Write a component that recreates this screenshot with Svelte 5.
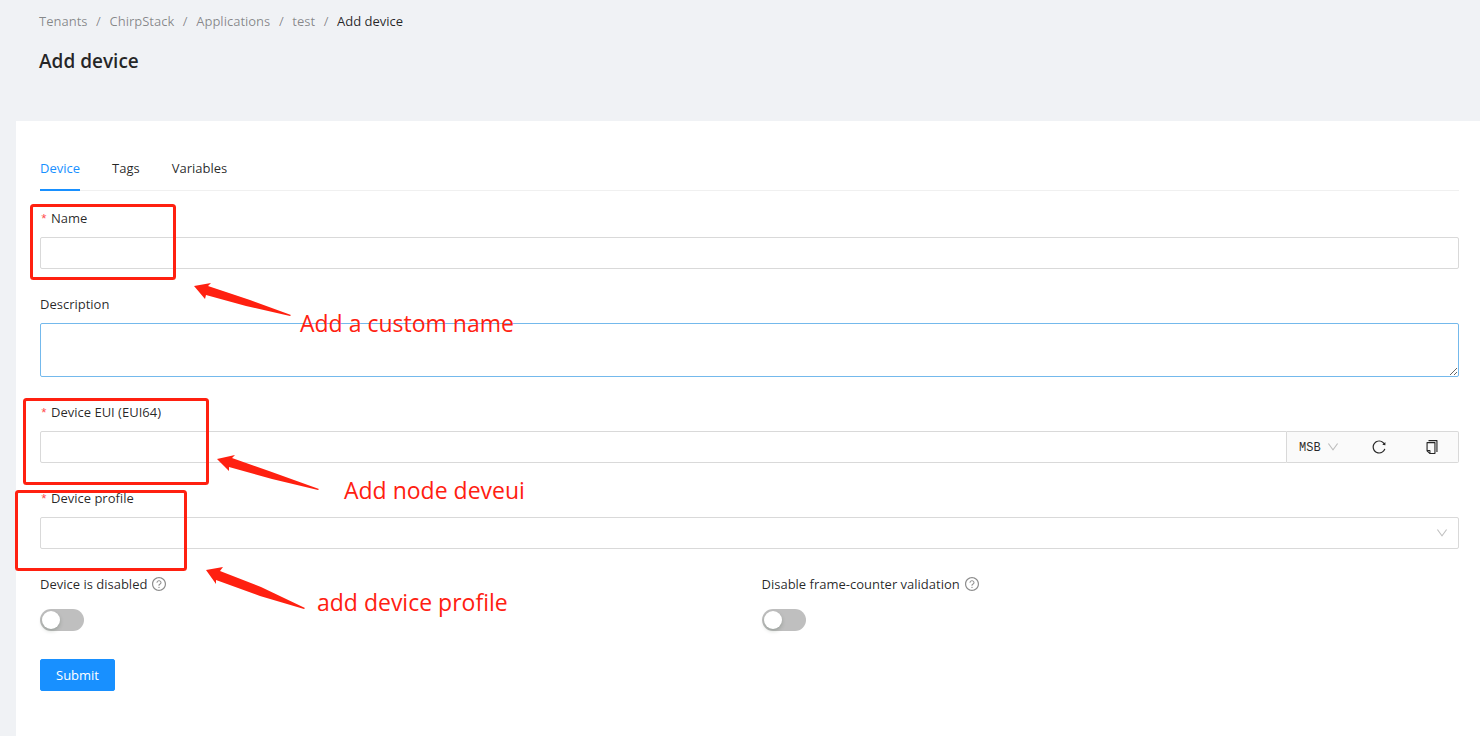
<!-- App.svelte - Add device form with setup hints -->
<script lang="ts">
  const crumbs = ['Tenants', 'ChirpStack', 'Applications', 'test'];
  const tabs = ['Device', 'Tags', 'Variables'];

  let activeTab = $state('Device');
  let name = $state('');
  let description = $state('');
  let devEui = $state('');
  let byteOrder = $state('MSB');
  let profile = $state('');

  const switches = $state([
    { id: 'is-disabled', label: 'Device is disabled', on: false },
    { id: 'skip-fcnt', label: 'Disable frame-counter validation', on: false },
  ]);

  const hints = [
    {
      text: 'Add a custom name',
      x: 300,
      y: 332,
      box: { x: 31.5, y: 205.5, w: 143, h: 73 },
      arrow: 'M194 286 L211 283 L208 286 L250 300 L291 315 L290 316 L246 306 L206 295 L205 299 Z',
    },
    {
      text: 'Add node deveui',
      x: 344,
      y: 499,
      box: { x: 24.5, y: 399.5, w: 183, h: 84 },
      arrow: 'M217 459 L235 455 L232 458 L269 471 L319 489 L318 490 L272 479 L229 467 L229 471 Z',
    },
    {
      text: 'add device profile',
      x: 317,
      y: 611,
      box: { x: 16.5, y: 491.5, w: 169, h: 78 },
      arrow: 'M206 570 L223 567 L220 571 L261 587 L305 608 L304 609 L260 596 L216 580 L216 584 Z',
    },
  ];

  function generateEui() {
    const bytes = crypto.getRandomValues(new Uint8Array(8));
    devEui = Array.from(bytes, (b) => b.toString(16).padStart(2, '0')).join('');
  }
</script>

{#snippet chevron()}
  <svg class="chevron" viewBox="64 64 896 896" aria-hidden="true">
    <path d="M884 256h-75c-5.1 0-9.9 2.5-12.9 6.6L512 654.2 227.9 262.6c-3-4.1-7.8-6.6-12.9-6.6h-75c-6.5 0-10.3 7.4-6.5 12.7l352.6 486.1c12.8 17.6 39 17.6 51.7 0l352.6-486.1c3.9-5.3.1-12.7-6.4-12.7z" />
  </svg>
{/snippet}

<div class="page">
  <header class="page-header">
    <nav class="breadcrumb" aria-label="Breadcrumb">
      {#each crumbs as crumb}
        <a href="#{crumb.toLowerCase()}">{crumb}</a>
        <span class="separator">/</span>
      {/each}
      <span class="current">Add device</span>
    </nav>
    <h1>Add device</h1>
  </header>

  <main class="card">
    <div class="tabs" role="tablist">
      {#each tabs as tab}
        <button
          type="button"
          role="tab"
          class="tab"
          class:active={tab === activeTab}
          aria-selected={tab === activeTab}
          onclick={() => (activeTab = tab)}
        >{tab}</button>
      {/each}
    </div>

    <form onsubmit={(e) => e.preventDefault()}>
      <div class="field">
        <label class="required" for="name">Name</label>
        <input class="control" id="name" type="text" bind:value={name} />
      </div>

      <div class="field">
        <label for="description">Description</label>
        <textarea class="control" id="description" rows="2" bind:value={description}></textarea>
      </div>

      <div class="field">
        <label class="required" for="dev-eui">Device EUI (EUI64)</label>
        <div class="input-group">
          <input class="control" id="dev-eui" type="text" bind:value={devEui} />
          <div class="addon">
            <div class="select-wrap byte-order">
              <select aria-label="Byte order" bind:value={byteOrder}>
                <option>MSB</option>
                <option>LSB</option>
              </select>
              {@render chevron()}
            </div>
            <button type="button" class="icon-button" aria-label="Generate" onclick={generateEui}>
              <svg viewBox="64 64 896 896" aria-hidden="true">
                <path d="M909.1 209.3l-56.4 44.1C775.8 155.1 656.2 92 521.9 92 290 92 102.3 279.5 102 511.5 101.7 743.7 289.8 932 521.9 932c181.3 0 335.8-115 394.6-276.1 1.5-4.2-.7-8.9-4.9-10.3l-56.7-19.5a8 8 0 00-10.1 4.8c-1.8 5-3.8 10-5.9 14.9-17.3 41-42.1 77.8-73.7 109.4A344.77 344.77 0 01655.9 829c-42.3 17.9-87.4 27-133.8 27-46.5 0-91.5-9.1-133.8-27A341.5 341.5 0 01279 755.2a342.16 342.16 0 01-73.7-109.4c-17.9-42.4-27-87.4-27-133.9s9.1-91.5 27-133.9c17.3-41 42.1-77.8 73.7-109.4 31.6-31.6 68.4-56.4 109.3-73.8 42.3-17.9 87.4-27 133.8-27 46.5 0 91.5 9.1 133.8 27a341.5 341.5 0 01109.3 73.8c9.9 9.9 19.2 20.4 27.8 31.4l-60.2 47a8 8 0 003 14.1l175.6 43c5 1.2 9.9-2.6 9.9-7.7l.8-180.9c-.1-6.6-7.8-10.3-13-6.2z" />
              </svg>
            </button>
            <button type="button" class="icon-button" aria-label="Copy">
              <svg viewBox="64 64 896 896" aria-hidden="true">
                <path d="M832 64H296c-4.4 0-8 3.6-8 8v56c0 4.4 3.6 8 8 8h496v688c0 4.4 3.6 8 8 8h56c4.4 0 8-3.6 8-8V96c0-17.7-14.3-32-32-32zM704 192H192c-17.7 0-32 14.3-32 32v530.7c0 8.5 3.4 16.6 9.4 22.6l173.3 173.3c2.2 2.2 4.7 4 7.4 5.5v1.9h4.2c3.5 1.3 7.2 2 11 2H704c17.7 0 32-14.3 32-32V224c0-17.7-14.3-32-32-32zM350 856.2L263.9 770H350v86.2zM664 888H414V746c0-22.1-17.9-40-40-40H232V264h432v624z" />
              </svg>
            </button>
          </div>
        </div>
      </div>

      <div class="field">
        <label class="required" for="profile">Device profile</label>
        <div class="select-wrap">
          <select class="control" id="profile" bind:value={profile}>
            <option value=""></option>
          </select>
          {@render chevron()}
        </div>
      </div>

      <div class="row">
        {#each switches as item}
          <div class="field">
            <label for={item.id}>
              {item.label}
              <svg class="help" viewBox="64 64 896 896" aria-hidden="true">
                <path d="M512 64C264.6 64 64 264.6 64 512s200.6 448 448 448 448-200.6 448-448S759.4 64 512 64zm0 820c-205.4 0-372-166.6-372-372s166.6-372 372-372 372 166.6 372 372-166.6 372-372 372z" />
                <path d="M623.6 316.7C593.6 290.4 554 276 512 276s-81.6 14.5-111.6 40.7C369.2 344 352 380.7 352 420v7.6c0 4.4 3.6 8 8 8h48c4.4 0 8-3.6 8-8V420c0-44.1 43.1-80 96-80s96 35.9 96 80c0 31.1-22 59.6-56.1 72.7-21.2 8.1-39.2 22.3-52.1 40.9-13.1 19-19.9 41.8-19.9 64.9V620c0 4.4 3.6 8 8 8h48c4.4 0 8-3.6 8-8v-22.7a48.3 48.3 0 0130.9-44.8c59-22.7 97.1-74.7 97.1-132.5.1-39.3-17.1-76-48.3-103.3zM472 732a40 40 0 1080 0 40 40 0 10-80 0z" />
              </svg>
            </label>
            <div class="switch-line">
              <input class="switch" id={item.id} type="checkbox" role="switch" bind:checked={item.on} />
            </div>
          </div>
        {/each}
      </div>

      <button type="submit" class="submit">Submit</button>
    </form>
  </main>

  <!-- red callouts drawn over the form -->
  <svg class="hints">
    {#each hints as hint}
      <rect x={hint.box.x} y={hint.box.y} width={hint.box.w} height={hint.box.h} rx="2" />
      <path d={hint.arrow} />
      <text x={hint.x} y={hint.y}>{hint.text}</text>
    {/each}
  </svg>
</div>

<style>
  :global(body) {
    background: #f0f2f5;
  }

  .page {
    --primary: #1890ff;
    --text: rgba(0, 0, 0, 0.85);
    --muted: rgba(0, 0, 0, 0.45);
    --line: #d9d9d9;
    --hint: #ff2010;
    position: relative;
    display: flex;
    flex-direction: column;
    box-sizing: border-box;
    min-height: 100vh;
    padding-left: 16px;
    color: var(--text);
    font: 13px / 22px 'Open Sans', 'Noto Sans', sans-serif;
  }

  .page *,
  .page *::before {
    box-sizing: border-box;
  }

  .page-header {
    padding: 10px 24px 44px 23px;
  }

  .breadcrumb {
    display: flex;
    gap: 8px;
    color: var(--muted);
  }

  .breadcrumb a {
    color: inherit;
    text-decoration: none;
  }

  .breadcrumb .separator {
    width: 6px;
    text-align: center;
  }

  .breadcrumb .current {
    color: var(--text);
  }

  h1 {
    margin: 13px 0 0;
    font-size: 19px;
    font-weight: 600;
    line-height: 32px;
  }

  .card {
    flex: 1;
    padding: 24px 21px 24px 24px;
    background: #fff;
  }

  .tabs {
    display: flex;
    gap: 32px;
    margin-bottom: 16px;
    box-shadow: inset 0 -1px #f0f0f0;
  }

  .tab {
    padding: 12px 0;
    border: 0;
    background: none;
    color: inherit;
    font: inherit;
    cursor: pointer;
  }

  .tab.active {
    color: var(--primary);
    box-shadow: inset 0 -2px var(--primary);
  }

  .field {
    display: flex;
    flex-direction: column;
    gap: 8px;
    margin-bottom: 24px;
  }

  label {
    display: flex;
    align-items: center;
    gap: 5px;
    height: 22px;
  }

  .required::before {
    content: '*';
    width: 6px;
    padding-top: 4px;
    color: #ff4d4f;
    font-family: 'Liberation Mono', monospace;
  }

  .control {
    width: 100%;
    height: 32px;
    padding: 4px 11px;
    border: 1px solid var(--line);
    border-radius: 2px;
    background: #fff;
    color: inherit;
    font: inherit;
    outline: 0;
  }

  textarea.control {
    display: block;
    height: 54px;
    border-color: #74b9ec;
    resize: vertical;
  }

  .input-group {
    display: flex;
  }

  .input-group .control {
    flex: 1;
    border-radius: 2px 0 0 2px;
  }

  .addon {
    display: flex;
    border: 1px solid var(--line);
    border-left: 0;
    border-radius: 0 2px 2px 0;
    background: #fafafa;
  }

  .select-wrap {
    display: grid;
    align-items: center;
  }

  .select-wrap > :global(*) {
    grid-area: 1 / 1;
  }

  select {
    appearance: none;
  }

  .byte-order {
    width: 65px;
    padding-right: 2px;
  }

  .byte-order select {
    height: 30px;
    padding: 2px 12px 0;
    border: 0;
    background: none;
    color: inherit;
    font: 12px 'Liberation Mono', monospace;
  }

  .chevron {
    justify-self: end;
    width: 12px;
    height: 12px;
    margin-right: 11px;
    fill: rgba(0, 0, 0, 0.25);
    pointer-events: none;
  }

  .icon-button {
    display: grid;
    place-items: center;
    width: 53px;
    padding: 0;
    border: 0;
    background: none;
    color: inherit;
    cursor: pointer;
  }

  .icon-button svg {
    width: 14px;
    height: 14px;
    fill: currentColor;
  }

  .row {
    display: grid;
    grid-template-columns: 1fr 1fr;
    gap: 24px;
  }

  .help {
    width: 14px;
    height: 14px;
    fill: var(--muted);
  }

  .switch-line {
    height: 32px;
    padding-top: 6px;
  }

  .switch {
    display: flex;
    width: 44px;
    height: 22px;
    margin: 0;
    padding: 2px;
    border-radius: 11px;
    background: #bfbfbf;
    appearance: none;
    cursor: pointer;
  }

  .switch::before {
    content: '';
    width: 18px;
    height: 18px;
    border-radius: 50%;
    background: #fff;
    box-shadow: 0 2px 4px rgba(0, 35, 11, 0.2);
  }

  .switch:checked {
    justify-content: flex-end;
    background: var(--primary);
  }

  .submit {
    height: 32px;
    padding: 4px 15px;
    border: 1px solid var(--primary);
    border-radius: 2px;
    background: var(--primary);
    color: #fff;
    font: inherit;
    cursor: pointer;
  }

  .hints {
    position: absolute;
    inset: 0;
    width: 100%;
    height: 100%;
    pointer-events: none;
  }

  .hints rect {
    fill: none;
    stroke: var(--hint);
    stroke-width: 3;
  }

  .hints path,
  .hints text {
    fill: var(--hint);
  }

  .hints text {
    font-size: 23px;
  }
</style>
